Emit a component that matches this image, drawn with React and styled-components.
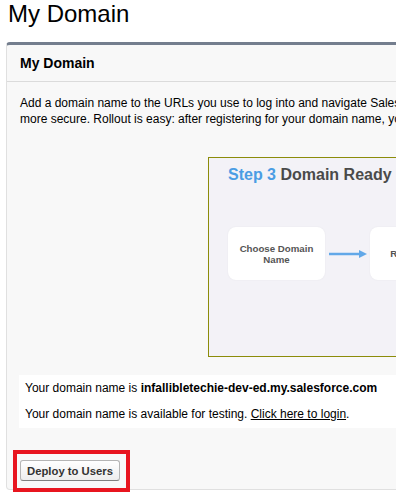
import React from 'react';
import styled, { createGlobalStyle } from 'styled-components';

const GlobalStyle = createGlobalStyle`
  html, body {
    margin: 0;
    padding: 0;
    background: #fff;
  }
  body {
    font-family: "Liberation Sans", Arial, sans-serif;
    color: #000;
  }
`;

const Page = styled.div`
  width: 396px;
  height: 497px;
  overflow: hidden;
`;

const Title = styled.h1`
  margin: 0;
  padding-left: 8px;
  font-size: 24px;
  line-height: 28px;
  font-weight: normal;
  color: #000;
`;

const Panel = styled.section`
  margin: 14px 0 0 6px;
  width: 1000px;
  background: #f8f8f8;
  border: 1px solid #e0e0e0;
  border-top: 3px solid #747e8e;
  border-radius: 4px 0 0 4px;
`;

const PanelHeader = styled.div`
  height: 36px;
  display: flex;
  align-items: center;
  padding-left: 13px;
  border-bottom: 1px solid #dbdbdb;
  font-size: 14px;
  font-weight: bold;
`;

const PanelBody = styled.div`
  padding: 13px 12px 0;
`;

const Intro = styled.p`
  margin: 0 0 0 1px;
  font-size: 12px;
  line-height: 16px;
  white-space: nowrap;
`;

const Diagram = styled.div`
  margin: 30px 0 0 189px;
  width: 440px;
  height: 198px;
  background: #f3f2f7;
  border: 1px solid #8c8c0a;
  padding: 0 0 0 19px;
`;

const DiagramTitle = styled.div`
  margin-top: 7px;
  font-size: 16px;
  font-weight: bold;
  line-height: 20px;
  color: #4a4a4a;
`;

const StepLabel = styled.span`
  color: #4a9de4;
`;

const StepRow = styled.div`
  display: flex;
  align-items: center;
  margin-top: 42px;
`;

const StepBox = styled.div`
  width: 97px;
  height: 53px;
  background: #fff;
  border-radius: 8px;
  box-shadow: 0 0 2px rgba(0, 0, 0, 0.06);
  display: flex;
  align-items: center;
  justify-content: center;
  text-align: center;
  font-size: 9.7px;
  line-height: 11px;
  font-weight: bold;
  color: #555;
`;

const Arrow = styled.svg`
  display: block;
  margin: 0 3px 0 4px;
`;

const InfoBox = styled.div`
  margin-top: 18px;
  background: #fff;
  padding: 6px 6px 7px;
  font-size: 12px;
  line-height: 14px;
  display: flex;
  flex-direction: column;
  gap: 12px;
`;

const Link = styled.a`
  color: #000;
  text-decoration: underline;
`;

const Footer = styled.div`
  padding: 22px 0 0 6px;
`;

const Highlight = styled.div`
  display: inline-flex;
  border: 4px solid #e8151f;
  padding: 6px 6px 7px 3px;
  margin-bottom: -3px;
  background: #f8f8f8;
`;

const Button = styled.button`
  height: 21px;
  padding: 0 6px;
  font-family: "Liberation Sans", Arial, sans-serif;
  font-size: 11.3px;
  font-weight: bold;
  color: #333;
  background: linear-gradient(#ffffff, #ededed);
  border: 1px solid #b5b5b5;
  border-bottom-color: #7f7f7f;
  border-radius: 3px;
`;

export default function App() {
  return (
    <Page>
      <GlobalStyle />
      <Title>My Domain</Title>
      <Panel>
        <PanelHeader>My Domain</PanelHeader>
        <PanelBody>
          <Intro>
            Add a domain name to the URLs you use to log into and navigate Salesforce. A domain name helps you better manage login and authentication for your org.
            <br />
            more secure. Rollout is easy: after registering for your domain name, you can test it and then deploy it to your users.
          </Intro>
          <Diagram>
            <DiagramTitle>
              <StepLabel>Step 3</StepLabel> Domain Ready
            </DiagramTitle>
            <StepRow>
              <StepBox>Choose Domain<br />Name</StepBox>
              <Arrow width="38" height="10" viewBox="0 0 38 10">
                <line x1="0" y1="5" x2="32" y2="5" stroke="#62a8e8" strokeWidth="2.5" />
                <polygon points="30,1 38,5 30,9" fill="#62a8e8" />
              </Arrow>
              <StepBox>Registration</StepBox>
            </StepRow>
          </Diagram>
          <InfoBox>
            <div>
              Your domain name is <b>infallibletechie-dev-ed.my.salesforce.com</b>
            </div>
            <div>
              Your domain name is available for testing. <Link href="#">Click here to login</Link>.
            </div>
          </InfoBox>
        </PanelBody>
        <Footer>
          <Highlight>
            <Button>Deploy to Users</Button>
          </Highlight>
        </Footer>
      </Panel>
    </Page>
  );
}
